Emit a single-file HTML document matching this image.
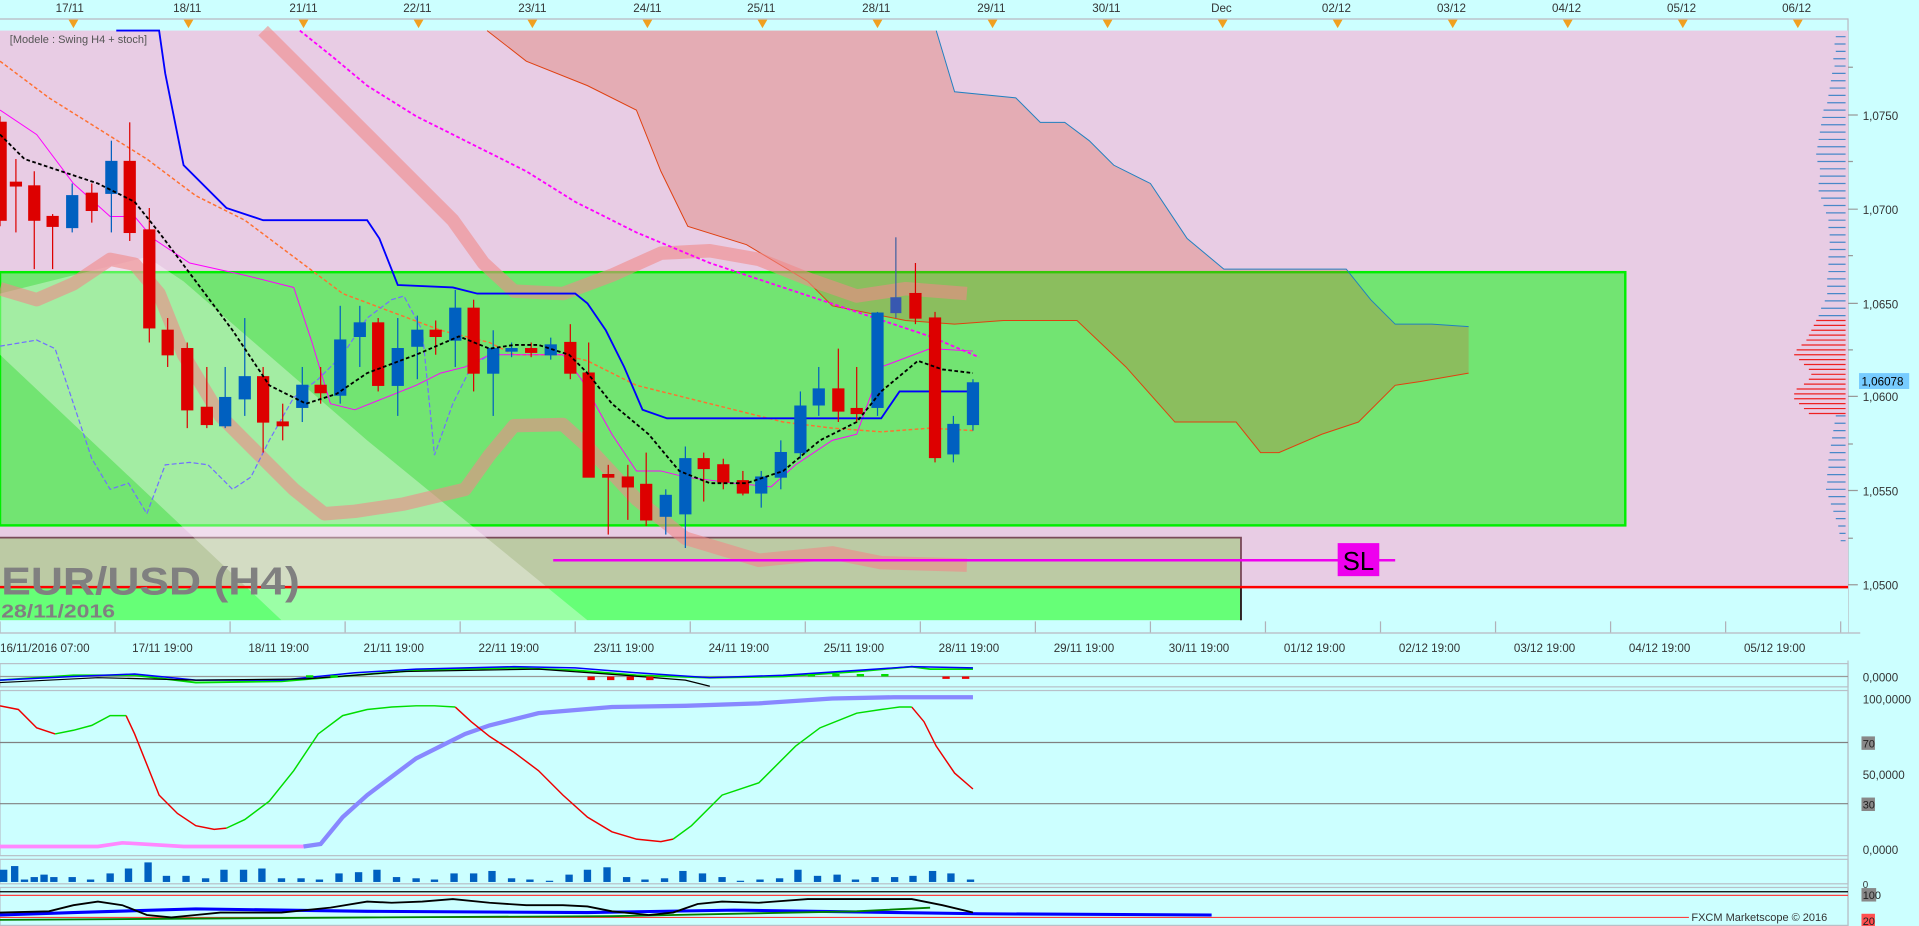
<!DOCTYPE html>
<html><head><meta charset="utf-8"><style>
html,body{margin:0;padding:0;background:#ccffff;overflow:hidden}
svg{display:block}
text{font-family:"Liberation Sans",sans-serif}
</style></head><body>
<svg width="1919" height="926" viewBox="0 0 1568 757" preserveAspectRatio="none" xmlns="http://www.w3.org/2000/svg">
<rect x="0" y="0" width="1568" height="757" fill="#ccffff"/>
<!-- top axis -->
<g font-size="9.5" fill="#333" text-anchor="middle">
<text x="57" y="10">17/11</text><text x="153" y="10">18/11</text><text x="248" y="10">21/11</text><text x="341" y="10">22/11</text><text x="435" y="10">23/11</text><text x="529" y="10">24/11</text><text x="622" y="10">25/11</text><text x="716" y="10">28/11</text><text x="810" y="10">29/11</text><text x="904" y="10">30/11</text><text x="998" y="10">Dec</text><text x="1092" y="10">02/12</text><text x="1186" y="10">03/12</text><text x="1280" y="10">04/12</text><text x="1374" y="10">05/12</text><text x="1468" y="10">06/12</text>
</g>
<line x1="0" y1="15.5" x2="1510" y2="15.5" stroke="#b8b8c0"/>
<line x1="1510" y1="15" x2="1510" y2="517" stroke="#b8b8c0"/>
<g fill="#f0a020">
<path d="M56 16h8l-4 7z"/><path d="M150 16h8l-4 7z"/><path d="M244 16h8l-4 7z"/><path d="M338 16h8l-4 7z"/><path d="M431 16h8l-4 7z"/><path d="M525 16h8l-4 7z"/><path d="M619 16h8l-4 7z"/><path d="M713 16h8l-4 7z"/><path d="M807 16h8l-4 7z"/><path d="M901 16h8l-4 7z"/><path d="M995 16h8l-4 7z"/><path d="M1089 16h8l-4 7z"/><path d="M1183 16h8l-4 7z"/><path d="M1277 16h8l-4 7z"/><path d="M1371 16h8l-4 7z"/><path d="M1465 16h8l-4 7z"/>
</g>
<!-- main bg -->
<rect x="0" y="25" width="1510" height="455" fill="#e8cce4"/>
<rect x="0" y="480" width="1510" height="37" fill="#ccffff"/>
<!-- green box -->
<rect x="0" y="222.5" width="1328" height="207" fill="#72e472" stroke="#00ee00" stroke-width="2"/>
<!-- lower box -->
<rect x="0" y="439" width="1014" height="41" fill="#bccaa4"/>
<rect x="0" y="480" width="1014" height="27" fill="#66ff77"/>
<path d="M0 439.5H1014V507" fill="none" stroke="#7a4a5a" stroke-width="1.5"/>
<line x1="1014" y1="480" x2="1014" y2="507" stroke="#000"/>
<!-- cloud -->
<path d="M398 25 L765 25 L780 75 L830 80 L850 100 L870 100 L890 115 L910 135 L940 150 L960 180 L970 195 L1000 220 L1100 220 L1120 245 L1140 265 L1170 265 L1200 267 L1200 305 L1160 312 L1140 315 L1110 345 L1080 355 L1045 370 L1030 370 L1010 345 L960 345 L920 300 L880 262 L820 262 L780 265 L740 262 L680 250 L660 230 L610 200 L562 185 L540 140 L520 90 L480 70 L430 50 Z" fill="rgb(216,76,36)" fill-opacity="0.25"/>
<path d="M765 25 L780 75 L830 80 L850 100 L870 100 L890 115 L910 135 L940 150 L960 180 L970 195 L1000 220 L1100 220 L1120 245 L1140 265 L1170 265 L1200 267" fill="none" stroke="#2080c0" stroke-width="0.8"/>
<path d="M1200 305 L1160 312 L1140 315 L1110 345 L1080 355 L1045 370 L1030 370 L1010 345 L960 345 L920 300 L880 262 L820 262 L780 265 L740 262 L680 250 L660 230 L610 200 L562 185 L540 140 L520 90 L480 70 L430 50 L398 25" fill="none" stroke="#e04010" stroke-width="0.8"/>
<!-- white diagonal band -->
<path d="M0 240 L0 290 L230 507 L480 507 L300 360 L150 230 L120 210 Z" fill="#ffffff" fill-opacity="0.35"/>
<!-- salmon bands -->
<g fill="none" stroke="#f08888" stroke-opacity="0.6" stroke-width="11" stroke-linejoin="round">
<path d="M215 25 L260 70 L300 110 L340 150 L370 180 L395 215 L420 238 L460 240 L500 225 L540 207 L580 205 L620 212 L660 228 L700 242 L740 236 L790 240"/>
<path d="M0 236 L30 245 L60 232 L90 212 L110 216 L130 240 L150 290 L180 340 L210 370 L240 400 L265 420 L290 418 L330 412 L380 400 L400 372 L420 348 L460 347 L480 365 L520 408 L560 440 L620 458 L680 452 L720 460 L790 462"/>
</g>
<!-- lines -->
<path d="M0 50 L40 80 L80 105 L120 130 L160 160 L200 180 L240 210 L280 240 L320 255 L360 270 L400 280 L420 290 L460 290 L480 295 L520 315 L560 325 L600 335 L640 345 L680 350 L720 353 L760 350 L795 352" fill="none" stroke="#ff7030" stroke-width="1.2" stroke-dasharray="3,2"/>
<path d="M245 25 L270 45 L300 70 L340 95 L380 115 L430 140 L470 165 L520 190 L580 215 L640 235 L700 255 L760 275 L800 292" fill="none" stroke="#ff00ff" stroke-width="1.5" stroke-dasharray="3,2"/>
<path d="M0 90 L30 110 L60 150 L90 177 L110 177 L125 195 L155 215 L200 225 L240 235 L255 280 L270 330 L290 335 L340 315 L360 305 L380 300 L400 290 L460 290 L475 310 L500 355 L520 385 L540 385 L560 390 L600 395 L630 398 L650 380 L680 360 L700 355 L720 300 L760 285 L795 287" fill="none" stroke="#ff00ff" stroke-width="0.8"/>
<path d="M0 283 L30 278 L45 285 L60 330 L75 375 L90 400 L105 395 L120 420 L135 380 L155 378 L170 380 L190 400 L205 390 L220 360 L240 325 L260 310 L280 290 L300 260 L320 245 L330 242 L345 270 L355 372 L370 330 L385 300 L400 290" fill="none" stroke="#7070ff" stroke-width="1" stroke-dasharray="4,2"/>
<path d="M95 25 L130 25 L135 60 L150 135 L185 170 L215 180 L300 180 L310 195 L325 233 L370 235 L390 240 L470 240 L480 248 L495 270 L510 300 L525 335 L545 342 L720 342 L735 320 L795 320" fill="none" stroke="#0000ff" stroke-width="1.5"/>
<!-- candles -->
<g stroke-width="1">
<g stroke="#dd0000" fill="#dd0000">
<line x1="0" y1="95" x2="0" y2="185"/><rect x="-4" y="100" width="9" height="80"/>
<line x1="13" y1="130" x2="13" y2="190"/><rect x="8.5" y="149" width="9" height="3"/>
<line x1="28" y1="140" x2="28" y2="220"/><rect x="23.5" y="152" width="9" height="28"/>
<line x1="43" y1="175" x2="43" y2="220"/><rect x="38.5" y="177" width="9" height="8"/>
<line x1="75" y1="150" x2="75" y2="182"/><rect x="70.5" y="158" width="9" height="14"/>
<line x1="106" y1="100" x2="106" y2="197"/><rect x="101.5" y="132" width="9" height="58"/>
<line x1="122" y1="170" x2="122" y2="280"/><rect x="117.5" y="188" width="9" height="80"/>
<line x1="137" y1="260" x2="137" y2="300"/><rect x="132.5" y="270" width="9" height="20"/>
<line x1="153" y1="280" x2="153" y2="350"/><rect x="148.5" y="285" width="9" height="50"/>
<line x1="169" y1="300" x2="169" y2="350"/><rect x="164.5" y="333" width="9" height="14"/>
<line x1="215" y1="300" x2="215" y2="370"/><rect x="210.5" y="308" width="9" height="37"/>
<line x1="231" y1="330" x2="231" y2="360"/><rect x="226.5" y="345" width="9" height="3"/>
<line x1="262" y1="300" x2="262" y2="330"/><rect x="257.5" y="315" width="9" height="6"/>
<line x1="309" y1="260" x2="309" y2="320"/><rect x="304.5" y="264" width="9" height="51"/>
<line x1="356" y1="262" x2="356" y2="290"/><rect x="351.5" y="270" width="9" height="5"/>
<line x1="387" y1="245" x2="387" y2="320"/><rect x="382.5" y="252" width="9" height="53"/>
<line x1="434" y1="280" x2="434" y2="292"/><rect x="429.5" y="285" width="9" height="3"/>
<line x1="466" y1="265" x2="466" y2="310"/><rect x="461.5" y="280" width="9" height="25"/>
<line x1="481" y1="280" x2="481" y2="390"/><rect x="476.5" y="305" width="9" height="85"/>
<line x1="497" y1="380" x2="497" y2="437"/><rect x="492.5" y="388" width="9" height="2"/>
<line x1="513" y1="380" x2="513" y2="425"/><rect x="508.5" y="390" width="9" height="8"/>
<line x1="528" y1="370" x2="528" y2="430"/><rect x="523.5" y="396" width="9" height="29"/>
<line x1="575" y1="370" x2="575" y2="410"/><rect x="570.5" y="375" width="9" height="8"/>
<line x1="591" y1="375" x2="591" y2="400"/><rect x="586.5" y="380" width="9" height="14"/>
<line x1="607" y1="385" x2="607" y2="405"/><rect x="602.5" y="393" width="9" height="10"/>
<line x1="685" y1="285" x2="685" y2="345"/><rect x="680.5" y="318" width="9" height="18"/>
<line x1="700" y1="300" x2="700" y2="345"/><rect x="695.5" y="334" width="9" height="4"/>
<line x1="748" y1="215" x2="748" y2="265"/><rect x="743.5" y="240" width="9" height="20"/>
<line x1="764" y1="255" x2="764" y2="378"/><rect x="759.5" y="260" width="9" height="114"/>
</g>
<g stroke="#0060c0" fill="#0060c0">
<line x1="59" y1="150" x2="59" y2="190"/><rect x="54.5" y="160" width="9" height="26"/>
<line x1="91" y1="115" x2="91" y2="190"/><rect x="86.5" y="132" width="9" height="26"/>
<line x1="184" y1="300" x2="184" y2="350"/><rect x="179.5" y="325" width="9" height="23"/>
<line x1="200" y1="260" x2="200" y2="340"/><rect x="195.5" y="308" width="9" height="18"/>
<line x1="247" y1="300" x2="247" y2="345"/><rect x="242.5" y="315" width="9" height="18"/>
<line x1="278" y1="250" x2="278" y2="330"/><rect x="273.5" y="278" width="9" height="45"/>
<line x1="294" y1="250" x2="294" y2="300"/><rect x="289.5" y="264" width="9" height="11"/>
<line x1="325" y1="260" x2="325" y2="340"/><rect x="320.5" y="285" width="9" height="30"/>
<line x1="341" y1="258" x2="341" y2="310"/><rect x="336.5" y="270" width="9" height="13"/>
<line x1="372" y1="237" x2="372" y2="300"/><rect x="367.5" y="252" width="9" height="26"/>
<line x1="403" y1="270" x2="403" y2="340"/><rect x="398.5" y="285" width="9" height="20"/>
<line x1="418" y1="280" x2="418" y2="292"/><rect x="413.5" y="285" width="9" height="2"/>
<line x1="450" y1="276" x2="450" y2="294"/><rect x="445.5" y="282" width="9" height="8"/>
<line x1="544" y1="400" x2="544" y2="437"/><rect x="539.5" y="405" width="9" height="17"/>
<line x1="560" y1="365" x2="560" y2="448"/><rect x="555.5" y="375" width="9" height="45"/>
<line x1="622" y1="385" x2="622" y2="415"/><rect x="617.5" y="390" width="9" height="13"/>
<line x1="638" y1="360" x2="638" y2="400"/><rect x="633.5" y="370" width="9" height="20"/>
<line x1="654" y1="320" x2="654" y2="375"/><rect x="649.5" y="332" width="9" height="38"/>
<line x1="669" y1="300" x2="669" y2="340"/><rect x="664.5" y="318" width="9" height="13"/>
<line x1="717" y1="255" x2="717" y2="340"/><rect x="712.5" y="256" width="9" height="77"/>
<line x1="779" y1="340" x2="779" y2="378"/><rect x="774.5" y="347" width="9" height="24"/>
<line x1="795" y1="310" x2="795" y2="352"/><rect x="790.5" y="313" width="9" height="34"/>
</g>
<line x1="732" y1="194" x2="732" y2="260" stroke="#4060a0"/><rect x="727.5" y="243" width="9" height="13" fill="#3858b0"/>
</g>
<path d="M0 110 L20 130 L50 140 L80 150 L110 165 L130 190 L160 230 L190 270 L220 315 L250 330 L275 322 L300 305 L340 290 L375 275 L400 285 L420 282 L440 282 L465 290 L480 305 L500 330 L530 355 L555 385 L580 395 L610 395 L640 385 L670 360 L700 345 L720 320 L750 295 L770 302 L795 305" fill="none" stroke="#000" stroke-width="1.5" stroke-dasharray="3,2"/>
<!-- SL -->
<line x1="452" y1="458" x2="1140" y2="458" stroke="#ee00ee" stroke-width="2"/>
<rect x="1093" y="444" width="34" height="27" fill="#ee00ee"/>
<text x="1110" y="466" font-size="21" text-anchor="middle" fill="#000">SL</text>
<!-- red line -->
<line x1="0" y1="480" x2="1510" y2="480" stroke="#ff0000" stroke-width="2"/>
<text x="1" y="486" font-size="32" font-weight="bold" fill="#808080" textLength="244" lengthAdjust="spacingAndGlyphs">EUR/USD (H4)</text>
<text x="1" y="505" font-size="15" font-weight="bold" fill="#808080" textLength="93" lengthAdjust="spacingAndGlyphs">28/11/2016</text>
<text x="8" y="35" font-size="9" fill="#555">[Modele : Swing H4 + stoch]</text>
<!-- volume profile -->
<g stroke-width="1">
<path d="M1500 30H1508M1499 36H1508M1500 42H1508M1498 48H1508M1499 54H1508M1497 60H1508M1496 66H1508M1495 72H1508M1494 78H1508M1493 84H1508M1490 90H1508M1489 96H1508M1488 102H1508M1487 108H1508M1486 114H1508M1485 120H1508M1484 126H1508M1485 132H1508M1487 138H1508M1487 144H1508M1486 150H1508M1486 156H1508M1488 162H1508M1490 168H1508M1492 174H1508M1494 180H1508M1494 186H1508M1495 192H1508M1495 198H1508M1495 204H1508M1494 210H1508M1494 216H1508M1494 222H1508M1493 228H1508M1493 234H1508M1493 240H1508M1491 246H1508M1488 252H1508M1486 258H1508M1500 340H1508M1499 346H1508M1498 352H1508M1497 358H1508M1496 364H1508M1495 370H1508M1494 376H1508M1494 382H1508M1493 388H1508M1493 394H1508M1492 400H1508M1494 406H1508M1496 412H1508M1498 418H1508M1500 424H1508M1502 430H1508M1503 436H1508M1504 442H1508" stroke="#4888c8"/>
<path d="M1484 262H1508M1482 266H1508M1480 270H1508M1478 274H1508M1476 278H1508M1472 282H1508M1468 286H1508M1466 290H1508M1470 294H1508M1474 298H1508M1478 302H1508M1480 306H1508M1478 310H1508M1474 314H1508M1468 318H1508M1466 322H1508M1466 326H1508M1470 330H1508M1474 334H1508M1478 338H1508" stroke="#ee2020"/>
</g>
<!-- right axis -->
<g font-size="9.5" fill="#333">
<text x="1522" y="98">1,0750</text><text x="1522" y="175">1,0700</text><text x="1522" y="252">1,0650</text><text x="1522" y="328">1,0600</text><text x="1522" y="405">1,0550</text><text x="1522" y="482">1,0500</text>
</g>
<rect x="1519" y="305" width="41" height="13" fill="#77ccff"/>
<text x="1521" y="315" font-size="9.5" fill="#000">1,06078</text>
<g stroke="#999"><path d="M1510 94H1518M1510 171H1518M1510 248H1518M1510 324H1518M1510 401H1518M1510 478H1518M1510 55H1514M1510 132H1514M1510 209H1514M1510 286H1514M1510 363H1514M1510 440H1514"/></g>
<!-- bottom time axis -->
<line x1="0" y1="517.5" x2="1520" y2="517.5" stroke="#b8b8c0"/>
<g stroke="#b0b0b8"><path d="M0 517V508M94 517V508M188 517V508M282 517V508M376 517V508M470 517V508M564 517V508M658 517V508M752 517V508M846 517V508M940 517V508M1034 517V508M1128 517V508M1222 517V508M1316 517V508M1410 517V508M1504 517V508"/></g>
<g font-size="9.5" fill="#333">
<text x="0" y="533">16/11/2016 07:00</text><text x="108" y="533">17/11 19:00</text><text x="203" y="533">18/11 19:00</text><text x="297" y="533">21/11 19:00</text><text x="391" y="533">22/11 19:00</text><text x="485" y="533">23/11 19:00</text><text x="579" y="533">24/11 19:00</text><text x="673" y="533">25/11 19:00</text><text x="767" y="533">28/11 19:00</text><text x="861" y="533">29/11 19:00</text><text x="955" y="533">30/11 19:00</text><text x="1049" y="533">01/12 19:00</text><text x="1143" y="533">02/12 19:00</text><text x="1237" y="533">03/12 19:00</text><text x="1331" y="533">04/12 19:00</text><text x="1425" y="533">05/12 19:00</text>
</g>
<!-- panel separators -->
<g stroke="#b8c0c8" fill="none">
<rect x="0" y="542.5" width="1510" height="19"/>
<rect x="0" y="564.5" width="1510" height="135"/>
<rect x="0" y="702.5" width="1510" height="20"/>
<rect x="0" y="725.5" width="1510" height="31"/>
<line x1="1510" y1="540" x2="1510" y2="757"/>
</g>
<!-- MACD -->
<line x1="0" y1="553" x2="1510" y2="553" stroke="#999"/>
<path d="M0 556 L60 552 L110 552 L160 558 L230 557 L290 552 L340 548 L420 546 L470 548 L520 552 L580 554 L640 553 L700 549 L745 545 L760 547 L795 547" fill="none" stroke="#00dd00" stroke-width="1.5"/>
<path d="M0 556 L60 553 L110 551 L160 556 L230 556 L290 550 L340 547 L420 545 L470 546 L520 550 L580 554 L640 552 L700 548 L745 545 L795 546" fill="none" stroke="#0000ff" stroke-width="1.2"/>
<path d="M0 558 L80 554 L160 556 L250 555 L330 549 L440 547 L510 552 L560 556 L580 561" fill="none" stroke="#000" stroke-width="1"/>
<path d="M480 553h6v3h-6zM496 553h6v3h-6zM512 553h6v3h-6zM528 553h6v3h-6zM770 553h6v2h-6zM786 553h6v2h-6z" fill="#ee0000"/>
<path d="M250 552h6v2h-6zM270 552h6v2h-6zM660 551h6v2h-6zM680 551h6v2h-6zM700 551h6v2h-6zM720 551h6v2h-6z" fill="#00dd00"/>
<text x="1522" y="557" font-size="9.5" fill="#333">0,0000</text>
<!-- stoch -->
<line x1="0" y1="607" x2="1510" y2="607" stroke="#808080"/>
<line x1="0" y1="657" x2="1510" y2="657" stroke="#808080"/>
<path d="M0 692 L80 692 L100 689 L150 692 L248 692" fill="none" stroke="#ff88ff" stroke-width="3"/>
<path d="M248 692 L262 690 L280 668 L300 650 L320 635 L340 620 L360 610 L380 600 L400 593 L440 583 L500 578 L560 577 L620 575 L680 571 L730 570 L795 570" fill="none" stroke="#8888ff" stroke-width="3.5"/>
<path d="M0 577 L15 580 L30 595 L45 600 M103 585 L110 600 L120 625 L130 650 L145 665 L160 675 L175 678 L185 677 M372 578 L385 590 L400 602 L420 615 L440 630 L460 650 L480 668 L500 680 L520 686 L540 688 L550 686 M745 578 L755 590 L765 610 L780 632 L795 645" fill="none" stroke="#ee0000" stroke-width="1.2"/>
<path d="M45 600 L60 597 L75 593 L90 585 L103 585 M185 677 L200 670 L220 655 L240 630 L260 600 L280 585 L300 580 L320 578 L340 577 L355 577 L372 578 M550 686 L565 675 L590 650 L620 640 L650 610 L670 595 L700 583 L720 580 L735 578 L745 578" fill="none" stroke="#00dd00" stroke-width="1.2"/>
<g font-size="9.5" fill="#333"><text x="1522" y="575">100,0000</text><text x="1522" y="637">50,0000</text><text x="1522" y="698">0,0000</text></g>
<rect x="1521" y="602" width="11" height="11" fill="#888"/><text x="1522" y="611" font-size="9" fill="#222">70</text>
<rect x="1521" y="652" width="11" height="11" fill="#888"/><text x="1522" y="661" font-size="9" fill="#222">30</text>
<!-- volume -->
<g fill="#0060c0">
<rect x="0" y="711" width="6" height="10"/><rect x="9" y="708" width="6" height="13"/><rect x="17" y="719" width="6" height="2"/><rect x="25" y="717" width="6" height="4"/><rect x="33" y="715" width="6" height="6"/><rect x="41" y="717" width="6" height="4"/><rect x="56" y="717" width="6" height="4"/><rect x="71" y="719" width="6" height="2"/><rect x="87" y="714" width="6" height="7"/><rect x="102" y="710" width="6" height="11"/><rect x="118" y="705" width="6" height="16"/><rect x="133" y="716" width="6" height="5"/><rect x="149" y="716" width="6" height="5"/><rect x="165" y="718" width="6" height="3"/><rect x="180" y="711" width="6" height="10"/><rect x="196" y="711" width="6" height="10"/><rect x="211" y="710" width="6" height="11"/><rect x="227" y="718" width="6" height="3"/><rect x="243" y="718" width="6" height="3"/><rect x="258" y="719" width="6" height="2"/><rect x="274" y="714" width="6" height="7"/><rect x="290" y="713" width="6" height="8"/><rect x="305" y="711" width="6" height="10"/><rect x="321" y="717" width="6" height="4"/><rect x="337" y="718" width="6" height="3"/><rect x="352" y="719" width="6" height="2"/><rect x="368" y="714" width="6" height="7"/><rect x="384" y="714" width="6" height="7"/><rect x="399" y="712" width="6" height="9"/><rect x="415" y="718" width="6" height="3"/><rect x="430" y="719" width="6" height="2"/><rect x="446" y="720" width="6" height="1"/><rect x="462" y="715" width="6" height="6"/><rect x="477" y="711" width="6" height="10"/><rect x="493" y="709" width="6" height="12"/><rect x="509" y="717" width="6" height="4"/><rect x="524" y="719" width="6" height="2"/><rect x="540" y="718" width="6" height="3"/><rect x="555" y="712" width="6" height="9"/><rect x="571" y="714" width="6" height="7"/><rect x="587" y="717" width="6" height="4"/><rect x="602" y="720" width="6" height="1"/><rect x="618" y="719" width="6" height="2"/><rect x="634" y="718" width="6" height="3"/><rect x="649" y="711" width="6" height="10"/><rect x="665" y="716" width="6" height="5"/><rect x="681" y="715" width="6" height="6"/><rect x="696" y="719" width="6" height="2"/><rect x="712" y="717" width="6" height="4"/><rect x="728" y="717" width="6" height="4"/><rect x="743" y="716" width="6" height="5"/><rect x="759" y="712" width="6" height="9"/><rect x="774" y="714" width="6" height="7"/><rect x="790" y="719" width="6" height="2"/>
</g>
<text x="1522" y="726" font-size="8" fill="#333">0</text>
<!-- bottom panel -->
<line x1="0" y1="729" x2="1510" y2="729" stroke="#000"/>
<line x1="0" y1="732" x2="1510" y2="732" stroke="#ff4040"/>
<line x1="0" y1="750" x2="1380" y2="750" stroke="#ff4040"/>
<path d="M0 748 L60 746 L160 743 L300 745 L480 746 L600 744 L800 747 L990 748" fill="none" stroke="#0000ff" stroke-width="2.5"/>
<path d="M0 752 L150 751 L300 750 L500 749 L700 745 L760 742" fill="none" stroke="#008000" stroke-width="1.5"/>
<path d="M0 746 L40 745 L60 740 L80 737 L100 740 L120 748 L140 750 L160 748 L180 746 L230 746 L270 742 L300 737 L320 738 L345 737 L370 735 L400 738 L430 740 L460 740 L480 741 L500 745 L530 748 L550 746 L570 739 L590 737 L620 738 L660 735 L700 735 L745 735 L770 740 L795 746" fill="none" stroke="#000" stroke-width="1.5"/>
<text x="1382" y="753" font-size="9" fill="#333">FXCM Marketscope © 2016</text>
<rect x="1521" y="726" width="12" height="11" fill="#888"/><text x="1522" y="735" font-size="9" fill="#222">100</text>
<rect x="1521" y="747" width="11" height="10" fill="#ff5050"/><text x="1522" y="756" font-size="9" fill="#222">20</text>
</svg>
</body></html>
